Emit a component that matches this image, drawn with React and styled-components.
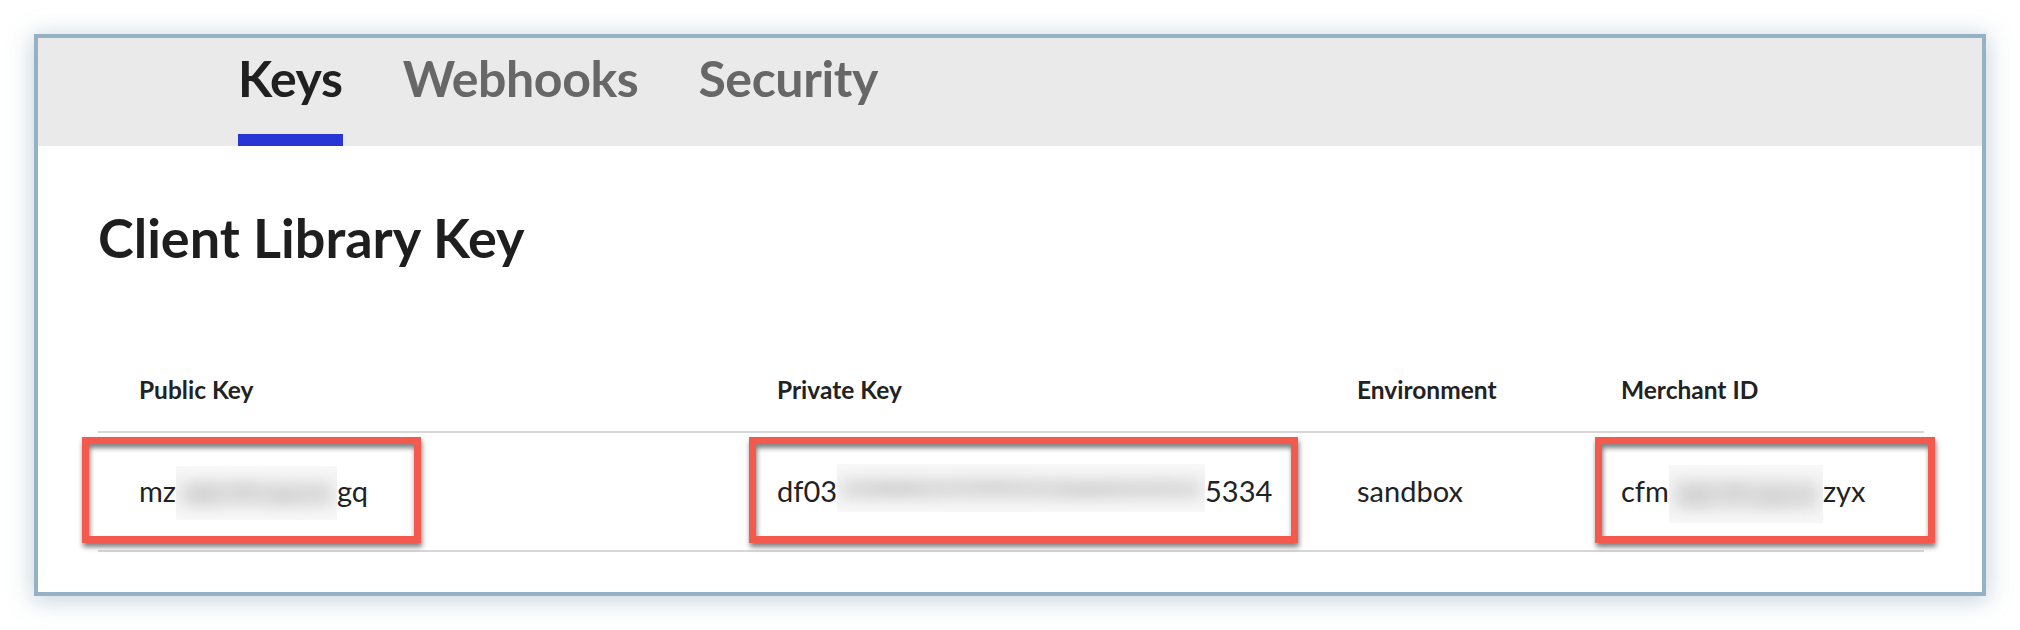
import React from "react";
import styled, { createGlobalStyle } from "styled-components";

const Global = createGlobalStyle`
  html, body { margin: 0; padding: 0; background: #ffffff; }
  body { font-family: Lato, "Noto Sans", sans-serif; color: #222; }
`;

const Page = styled.div`
  width: 2020px;
  height: 630px;
  padding: 34px 34px 0 34px;
  box-sizing: border-box;
  background: #ffffff;
`;

const Frame = styled.div`
  width: 1952px;
  height: 562px;
  box-sizing: border-box;
  border: 4px solid #94b2c3;
  background: #ffffff;
  box-shadow: 0 3px 22px 2px rgba(110, 145, 165, 0.38);
  display: flex;
  flex-direction: column;
`;

const TabBar = styled.nav`
  height: 108px;
  background: #eaeaea;
  display: flex;
  gap: 60px;
  padding-left: 200px;
  box-sizing: border-box;
`;

const Tab = styled.div`
  display: flex;
  flex-direction: column;
  padding-top: 11px;
  font-family: Lato, sans-serif;
  font-weight: 700;
  font-size: 50px;
  line-height: 58px;
  letter-spacing: -0.4px;
  color: ${(p) => (p.$active ? "#202020" : "#676767")};
  &::after {
    content: "";
    display: block;
    margin-top: auto;
    height: 12px;
    background: ${(p) => (p.$active ? "#2a35d6" : "transparent")};
  }
`;

const Content = styled.section`
  padding: 60px 58px 0 60px;
`;

const Title = styled.h1`
  margin: 0;
  font-family: Lato, sans-serif;
  font-weight: 700;
  font-size: 54px;
  line-height: 64px;
  color: #1e1e1e;
`;

const Table = styled.div`
  margin-top: 105px;
  display: grid;
  grid-template-columns: 638px 580px 264px 1fr;
`;

const HeadCell = styled.div`
  padding: 0 0 27px 41px;
  border-bottom: 2px solid #d7d7d7;
  font-family: Lato, sans-serif;
  font-weight: 700;
  font-size: 24.5px;
  line-height: 29px;
  color: #222;
`;

const Cell = styled.div`
  position: relative;
  height: 119px;
  box-sizing: border-box;
  padding: 40px 0 0 41px;
  border-bottom: 2px solid #d7d7d7;
  font-family: Lato, sans-serif;
  font-weight: 400;
  font-size: 29px;
  line-height: 35px;
  color: #222;
  white-space: nowrap;
`;

const Highlight = styled.div`
  position: absolute;
  top: 4px;
  left: ${(p) => p.$left}px;
  width: ${(p) => p.$width}px;
  height: 106px;
  box-sizing: border-box;
  border: 7px solid #f4594d;
  box-shadow: 1px 4px 5px rgba(0, 0, 0, 0.5),
    inset 1px 4px 5px rgba(0, 0, 0, 0.5);
  pointer-events: none;
`;

const Redacted = styled.span`
  position: relative;
  display: inline-block;
  width: ${(p) => p.$width}px;
  height: 0;
  vertical-align: baseline;
`;

const Smudge = styled.span`
  position: absolute;
  left: 0;
  right: 0;
  bottom: ${(p) => -p.$drop}px;
  height: ${(p) => p.$height}px;
  overflow: hidden;
  background: linear-gradient(180deg, #f8f8f8 0%, #f0f0f0 50%, #f8f8f8 100%);
  &::before {
    content: "";
    position: absolute;
    inset: 14px 6px 12px 6px;
    background:
      radial-gradient(ellipse 22% 60% at 15% 50%, #cfcfcf 0%, transparent 100%),
      radial-gradient(ellipse 20% 55% at 42% 40%, #d2d2d2 0%, transparent 100%),
      radial-gradient(ellipse 22% 55% at 68% 55%, #d0d0d0 0%, transparent 100%),
      radial-gradient(ellipse 20% 50% at 90% 50%, #d6d6d6 0%, transparent 100%),
      #e6e6e6;
    filter: blur(6px);
  }
`;

function Secret({ pre, post, w, h, d }) {
  return (
    <>
      {pre}
      <Redacted $width={w}>
        <Smudge $height={h} $drop={d} />
      </Redacted>
      {post}
    </>
  );
}

export default function App() {
  return (
    <>
      <Global />
      <Page>
        <Frame>
          <TabBar>
            <Tab $active>Keys</Tab>
            <Tab>Webhooks</Tab>
            <Tab>Security</Tab>
          </TabBar>
          <Content>
            <Title>Client Library Key</Title>
            <Table>
              <HeadCell>Public Key</HeadCell>
              <HeadCell>Private Key</HeadCell>
              <HeadCell>Environment</HeadCell>
              <HeadCell>Merchant ID</HeadCell>

              <Cell>
                <Secret pre="mz" post="gq" w={161} h={54} d={18} />
                <Highlight $left={-16} $width={339} />
              </Cell>
              <Cell>
                <Secret pre="df03" post="5334" w={368} h={48} d={10} />
                <Highlight $left={13} $width={549} />
              </Cell>
              <Cell>sandbox</Cell>
              <Cell>
                <Secret pre="cfm" post="zyx" w={154} h={58} d={21} />
                <Highlight $left={15} $width={340} />
              </Cell>
            </Table>
          </Content>
        </Frame>
      </Page>
    </>
  );
}
